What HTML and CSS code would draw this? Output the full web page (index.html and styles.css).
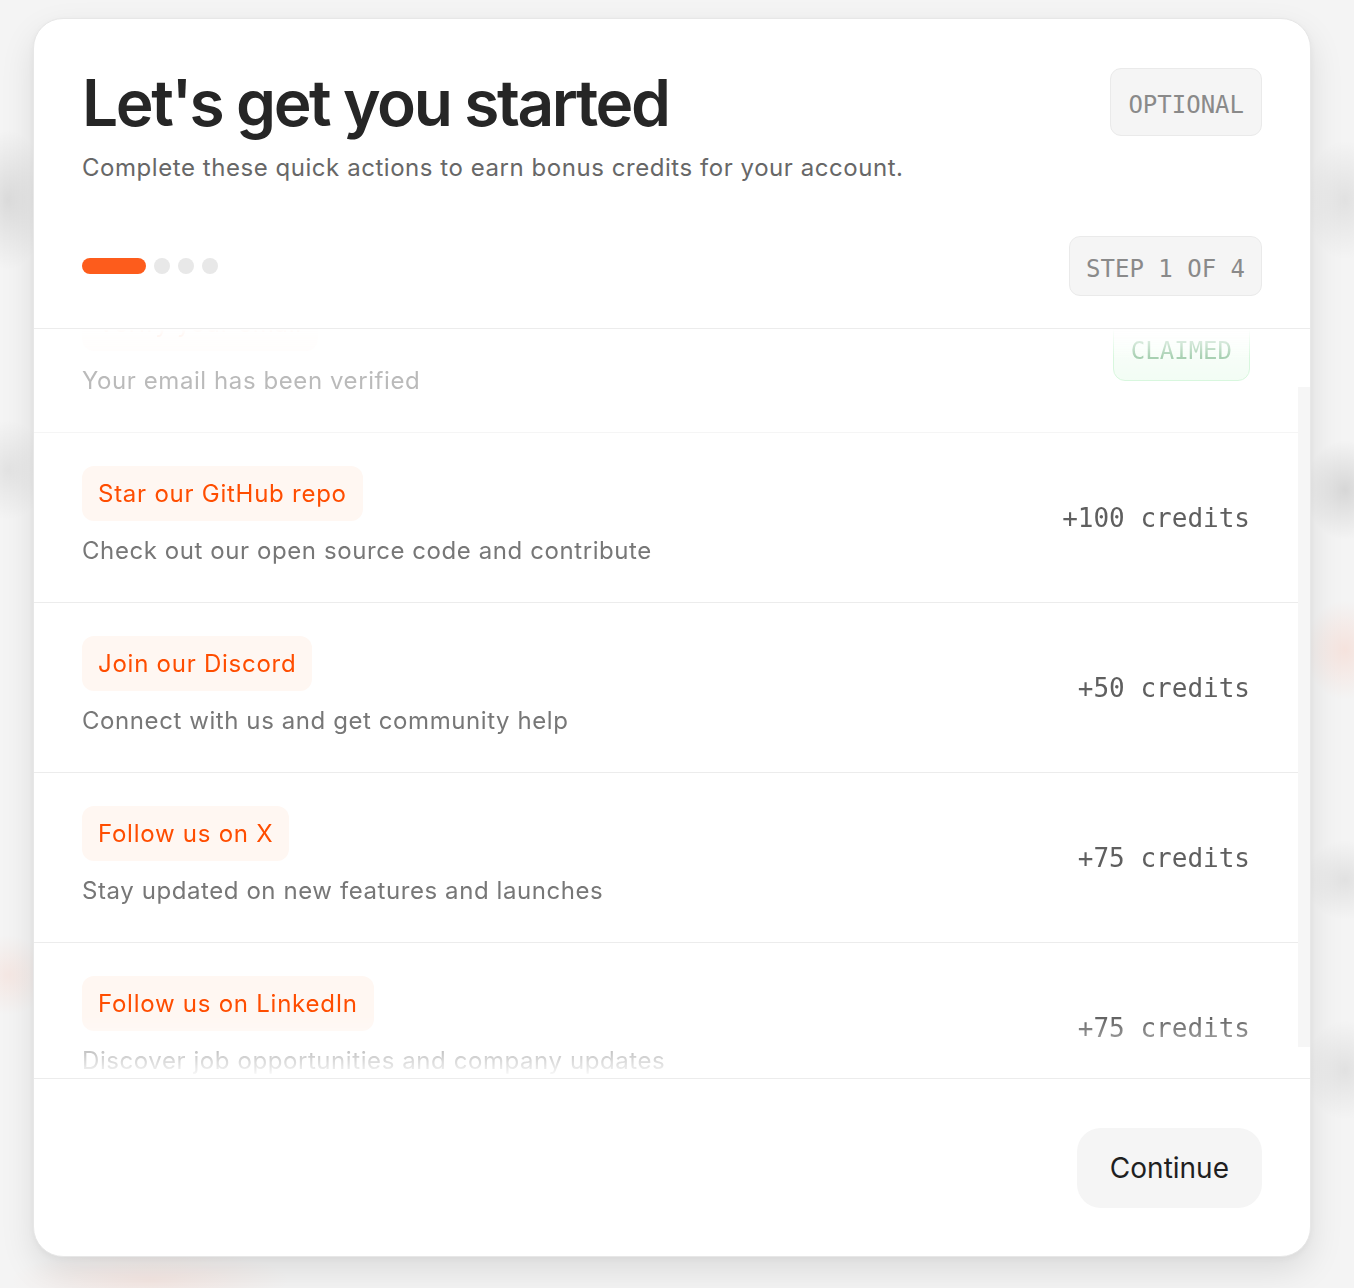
FILE: index.html
```html
<!DOCTYPE html>
<html lang="en">
<head>
<meta charset="utf-8">
<title>Let's get you started</title>
<link rel="stylesheet" href="styles.css">
</head>
<body>
  <div class="card">
    <header class="head">
      <div class="title-row">
        <h1 class="title">Let's get you started</h1>
        <span class="badge badge-optional">OPTIONAL</span>
      </div>
      <p class="subtitle">Complete these quick actions to earn bonus credits for your account.</p>
      <div class="progress-row">
        <div class="progress">
          <span class="bar"></span>
          <span class="dot"></span>
          <span class="dot"></span>
          <span class="dot"></span>
        </div>
        <span class="badge badge-step">STEP 1 OF 4</span>
      </div>
    </header>

    <div class="scroll">
      <div class="list">
        <div class="rows">
          <div class="row row-claimed">
            <div class="info">
              <span class="pill">Verify your email</span>
              <span class="desc">Your email has been verified</span>
            </div>
            <span class="claimed">CLAIMED</span>
          </div>
          <div class="row">
            <div class="info">
              <span class="pill">Star our GitHub repo</span>
              <span class="desc">Check out our open source code and contribute</span>
            </div>
            <span class="credits">+100 credits</span>
          </div>
          <div class="row">
            <div class="info">
              <span class="pill">Join our Discord</span>
              <span class="desc">Connect with us and get community help</span>
            </div>
            <span class="credits">+50 credits</span>
          </div>
          <div class="row">
            <div class="info">
              <span class="pill">Follow us on X</span>
              <span class="desc">Stay updated on new features and launches</span>
            </div>
            <span class="credits">+75 credits</span>
          </div>
          <div class="row">
            <div class="info">
              <span class="pill">Follow us on LinkedIn</span>
              <span class="desc">Discover job opportunities and company updates</span>
            </div>
            <span class="credits">+75 credits</span>
          </div>
        </div>
      </div>
      <div class="track"><div class="thumb"></div></div>
    </div>

    <footer class="foot">
      <button class="continue" type="button">Continue</button>
    </footer>
  </div>
</body>
</html>
```

FILE: styles.css
```css
* { box-sizing: border-box; }

html, body { height: 100%; }

body {
  margin: 0;
  padding: 18px 0 0 33px;
  font-family: Inter, "Noto Sans", "Liberation Sans", sans-serif;
  color: #262626;
  background-color: #f4f4f4;
  background-image:
    radial-gradient(ellipse 40px 70px at 8px 200px, rgba(0,0,0,0.10), transparent),
    radial-gradient(ellipse 40px 50px at 8px 470px, rgba(0,0,0,0.07), transparent),
    radial-gradient(ellipse 40px 40px at 8px 975px, rgba(255,120,80,0.10), transparent),
    radial-gradient(ellipse 40px 60px at 1345px 200px, rgba(0,0,0,0.08), transparent),
    radial-gradient(ellipse 40px 50px at 1345px 490px, rgba(0,0,0,0.12), transparent),
    radial-gradient(ellipse 40px 50px at 1345px 650px, rgba(255,120,80,0.14), transparent),
    radial-gradient(ellipse 40px 40px at 1345px 880px, rgba(0,0,0,0.08), transparent),
    radial-gradient(ellipse 40px 50px at 1345px 1070px, rgba(0,0,0,0.08), transparent),
    radial-gradient(ellipse 140px 30px at 150px 1280px, rgba(255,120,80,0.10), transparent);
  overflow: hidden;
}

.card {
  width: 1278px;
  height: 1239px;
  background: #fff;
  border: 1px solid #e7e7e7;
  border-radius: 30px;
  box-shadow: 0 14px 34px rgba(0,0,0,0.10), 0 2px 6px rgba(0,0,0,0.04);
  overflow: hidden;
  display: flex;
  flex-direction: column;
}

/* header */
.head {
  padding: 49px 48px 32px 48px;
  border-bottom: 1px solid #ececec;
  flex: none;
}

.title-row {
  display: flex;
  justify-content: space-between;
  align-items: flex-start;
}

.title {
  margin: 0;
  font-size: 64px;
  line-height: 70px;
  font-weight: 600;
  letter-spacing: -2.4px;
  color: #262626;
}

.subtitle {
  margin: 12px 0 0 0;
  font-size: 24px;
  line-height: 36px;
  letter-spacing: 0.55px;
  color: #676767;
}

.progress-row {
  margin-top: 50px;
  display: flex;
  justify-content: space-between;
  align-items: center;
}

.progress {
  display: flex;
  align-items: center;
  gap: 8px;
}

.bar {
  width: 64px;
  height: 16px;
  border-radius: 8px;
  background: #fd5c1c;
}

.dot {
  width: 16px;
  height: 16px;
  border-radius: 50%;
  background: #e8e8e8;
}

.badge {
  font-family: "DejaVu Sans Mono", "Liberation Mono", monospace;
  font-size: 24px;
  line-height: 28px;
  color: #8a8a8a;
  background: #f5f5f5;
  border: 1px solid #eaeaea;
  border-radius: 11px;
  white-space: nowrap;
}

.badge-optional { padding: 22px 17px 16px 17px; }
.badge-step { padding: 18px 16px 12px 16px; }

/* scroll area */
.scroll {
  flex: 1;
  display: flex;
  min-height: 0;
}

.list {
  flex: 1;
  overflow: hidden;
  -webkit-mask-image: linear-gradient(to bottom, transparent 0, #000 28px, #000 calc(100% - 62px), transparent 100%);
  mask-image: linear-gradient(to bottom, transparent 0, #000 28px, #000 calc(100% - 62px), transparent 100%);
}

.rows {
  margin-top: -66px; /* current scroll position */
}

.row {
  height: 170px;
  padding: 0 48px 0 48px;
  border-bottom: 1px solid #ececec;
  display: flex;
  justify-content: space-between;
  align-items: center;
}

.info {
  display: flex;
  flex-direction: column;
  align-items: flex-start;
  gap: 12px;
}

.pill {
  font-size: 24px;
  line-height: 31px;
  letter-spacing: 0.75px;
  padding: 12px 16px;
  border-radius: 12px;
  background: #fff7f2;
  color: #ff4d00;
}

.row-claimed .pill {
  background: #fffaf7;
  color: #ffb899;
}

.desc {
  font-size: 24px;
  line-height: 36px;
  letter-spacing: 0.58px;
  color: #777;
}

.credits {
  font-family: "DejaVu Sans Mono", "Liberation Mono", monospace;
  font-size: 26px;
  line-height: 32px;
  color: #5f5f5f;
  white-space: nowrap;
}

.row-claimed { opacity: 0.5; }

.claimed {
  font-family: "DejaVu Sans Mono", "Liberation Mono", monospace;
  font-size: 24px;
  line-height: 28px;
  padding: 22px 17px 15px 17px;
  color: #52a266;
  border: 1.5px solid #b2efbd;
  border-radius: 12px;
  background: linear-gradient(to bottom, #ffffff, #e6fbea);
}

.track {
  width: 12px;
  flex: none;
  padding-top: 58px;
}

.thumb {
  height: 660px;
  background: #f6f6f6;
}

/* footer */
.foot {
  flex: none;
  border-top: 1px solid #ececec;
  padding: 49px 48px 48px 48px;
  display: flex;
  justify-content: flex-end;
}

.continue {
  font-family: Inter, "Noto Sans", "Liberation Sans", sans-serif;
  font-size: 28px;
  line-height: 32px;
  padding: 24px 33px;
  border: none;
  border-radius: 24px;
  background: #f5f5f5;
  color: #1f1f1f;
}
```
